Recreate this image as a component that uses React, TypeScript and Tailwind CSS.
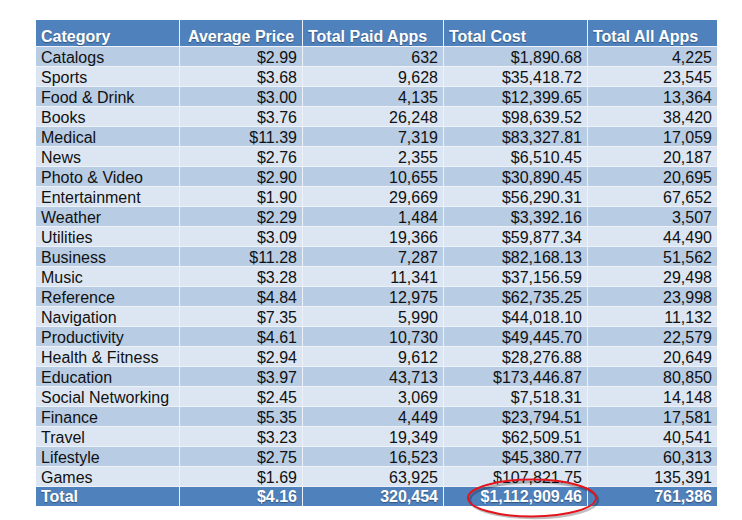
import React from "react";

const rows: [string, string, string, string, string][] = [
  ["Catalogs", "$2.99", "632", "$1,890.68", "4,225"],
  ["Sports", "$3.68", "9,628", "$35,418.72", "23,545"],
  ["Food & Drink", "$3.00", "4,135", "$12,399.65", "13,364"],
  ["Books", "$3.76", "26,248", "$98,639.52", "38,420"],
  ["Medical", "$11.39", "7,319", "$83,327.81", "17,059"],
  ["News", "$2.76", "2,355", "$6,510.45", "20,187"],
  ["Photo & Video", "$2.90", "10,655", "$30,890.45", "20,695"],
  ["Entertainment", "$1.90", "29,669", "$56,290.31", "67,652"],
  ["Weather", "$2.29", "1,484", "$3,392.16", "3,507"],
  ["Utilities", "$3.09", "19,366", "$59,877.34", "44,490"],
  ["Business", "$11.28", "7,287", "$82,168.13", "51,562"],
  ["Music", "$3.28", "11,341", "$37,156.59", "29,498"],
  ["Reference", "$4.84", "12,975", "$62,735.25", "23,998"],
  ["Navigation", "$7.35", "5,990", "$44,018.10", "11,132"],
  ["Productivity", "$4.61", "10,730", "$49,445.70", "22,579"],
  ["Health & Fitness", "$2.94", "9,612", "$28,276.88", "20,649"],
  ["Education", "$3.97", "43,713", "$173,446.87", "80,850"],
  ["Social Networking", "$2.45", "3,069", "$7,518.31", "14,148"],
  ["Finance", "$5.35", "4,449", "$23,794.51", "17,581"],
  ["Travel", "$3.23", "19,349", "$62,509.51", "40,541"],
  ["Lifestyle", "$2.75", "16,523", "$45,380.77", "60,313"],
  ["Games", "$1.69", "63,925", "$107,821.75", "135,391"],
];

const headers = ["Category", "Average Price", "Total Paid Apps", "Total Cost", "Total All Apps"];

export default function App() {
  return (
    <div className="w-[742px] h-[520px] bg-white relative overflow-hidden [font-family:'Liberation_Sans',Arial,sans-serif]">
      <div className="pt-[20px] pl-[36px]">
        <div className="w-[681px] grid grid-cols-[143px_122px_140px_143px_129px] gap-px bg-[#eef2f8] text-[16px]">
          {headers.map((h, i) => (
            <div
              key={h}
              className={`h-[26px] bg-[#4f81bd] text-white font-bold leading-[18px] flex items-end px-[5px] [text-shadow:0_1px_1px_rgba(0,0,0,0.35)] ${i === 1 ? "justify-center" : "justify-start"}`}
            >
              {h}
            </div>
          ))}
          {rows.map((r, ri) =>
            r.map((c, ci) => (
              <div
                key={`${ri}-${ci}`}
                className={`h-[19px] leading-[22px] px-[5px] text-[#111] whitespace-nowrap ${ri % 2 === 0 ? "bg-[#b8cce4]" : "bg-[#dce6f2]"} ${ci === 0 ? "text-left" : "text-right"}`}
              >
                {c}
              </div>
            ))
          )}
          {["Total", "$4.16", "320,454", "$1,112,909.46", "761,386"].map((c, ci) => (
            <div
              key={c}
              className={`h-[19px] leading-[20px] px-[5px] bg-[#4f81bd] text-white font-bold [text-shadow:0_1px_1px_rgba(0,0,0,0.35)] ${ci === 0 ? "text-left" : "text-right"}`}
            >
              {c}
            </div>
          ))}
        </div>
      </div>
      <svg className="absolute left-[460px] top-[474px]" width="150" height="46" viewBox="0 0 150 46">
        <ellipse cx="74" cy="26" rx="64" ry="18" fill="none" stroke="rgba(0,0,0,0.25)" strokeWidth="2.5" />
        <ellipse cx="72" cy="24" rx="64" ry="18.5" fill="none" stroke="#e3141b" strokeWidth="2" />
      </svg>
    </div>
  );
}
